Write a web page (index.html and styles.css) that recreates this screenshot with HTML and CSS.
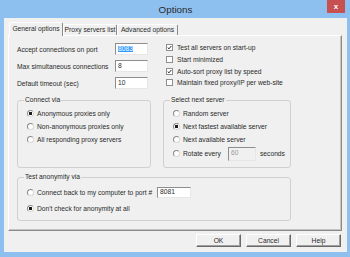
FILE: index.html
```html
<!DOCTYPE html>
<html lang="en">
<head>
    <meta charset="UTF-8">
    <title>Options</title>
    <link rel="stylesheet" href="styles.css">
</head>
<body>
    <div class="window">
        <!-- Title bar -->
        <div class="titlebar">
            <span></span>
            <span class="title">Options</span>
            <span class="close">x</span>
        </div>

        <div class="client">
            <!-- Tabs -->
            <div class="tabs">
                <div class="tab active tab-general">General options</div>
                <div class="tab tab-proxy">Proxy servers list</div>
                <div class="tab tab-advanced">Advanced options</div>
            </div>

            <div class="panel">
                <div class="top">
                    <div class="fields">
                        <div class="field">
                            <span class="field-label">Accept connections on port</span>
                            <span class="textbox"><span class="selected">8083</span></span>
                        </div>
                        <div class="field">
                            <span class="field-label">Max simultaneous connections</span>
                            <span class="textbox">8</span>
                        </div>
                        <div class="field">
                            <span class="field-label">Default timeout (sec)</span>
                            <span class="textbox">10</span>
                        </div>
                    </div>

                    <div class="checks">
                        <div class="check-row">
                            <span class="checkbox"><svg viewBox="0 0 7 7" width="5" height="5"><path d="M1 3.6 L2.8 5.4 L6 1.4" fill="none" stroke="#1a1a1a" stroke-width="1.3"/></svg></span>
                            <span>Test all servers on start-up</span>
                        </div>
                        <div class="check-row">
                            <span class="checkbox"></span>
                            <span>Start minimized</span>
                        </div>
                        <div class="check-row">
                            <span class="checkbox"><svg viewBox="0 0 7 7" width="5" height="5"><path d="M1 3.6 L2.8 5.4 L6 1.4" fill="none" stroke="#1a1a1a" stroke-width="1.3"/></svg></span>
                            <span>Auto-sort proxy list by speed</span>
                        </div>
                        <div class="check-row">
                            <span class="checkbox"></span>
                            <span>Maintain fixed proxy/IP per web-site</span>
                        </div>
                    </div>
                </div>

                <div class="groups">
                    <fieldset class="group connect">
                        <legend>Connect via</legend>
                        <div class="radio-row"><span class="radio on"></span>Anonymous proxies only</div>
                        <div class="radio-row"><span class="radio"></span>Non-anonymous proxies only</div>
                        <div class="radio-row"><span class="radio"></span>All responding proxy servers</div>
                    </fieldset>

                    <fieldset class="group next">
                        <legend>Select next server</legend>
                        <div class="radio-row"><span class="radio"></span>Random server</div>
                        <div class="radio-row"><span class="radio on"></span>Next fastest available server</div>
                        <div class="radio-row"><span class="radio"></span>Next available server</div>
                        <div class="radio-row tall">
                            <span class="radio"></span>
                            <span class="rotate-label">Rotate every</span>
                            <span class="textbox disabled">60</span>
                            <span class="seconds">seconds</span>
                        </div>
                    </fieldset>
                </div>

                <fieldset class="group anon">
                    <legend>Test anonymity via</legend>
                    <div class="radio-row">
                        <span class="radio"></span>
                        <span class="port-label">Connect back to my computer to port #</span>
                        <span class="textbox port">8081</span>
                    </div>
                    <div class="radio-row"><span class="radio on"></span>Don't check for anonymity at all</div>
                </fieldset>
            </div>

            <!-- Dialog buttons -->
            <div class="buttons">
                <button class="btn btn-default">OK</button>
                <button class="btn">Cancel</button>
                <button class="btn">Help</button>
            </div>
        </div>
    </div>
</body>
</html>
```

FILE: styles.css
```css
* {
    margin: 0;
    padding: 0;
    box-sizing: border-box;
}

body {
    width: 350px;
    height: 257px;
    overflow: hidden;
    font-family: "Liberation Sans", Arial, sans-serif;
    font-size: 6.7px;
    color: #2a2a2a;
}

/* Window frame */
.window {
    height: 257px;
    background-color: #8dc0ef;
    display: flex;
    flex-direction: column;
    padding: 0 3px 5px 4px;
}

.titlebar {
    height: 18px;
    display: grid;
    grid-template-columns: 1fr auto 1fr;
    align-items: start;
}

.title {
    font-size: 9.8px;
    line-height: 10px;
    padding-top: 5px;
    color: #2a2a2a;
}

.close {
    justify-self: end;
    width: 18px;
    height: 13px;
    margin-right: 2px;
    background-color: #c75050;
    color: #ffffff;
    font-size: 8px;
    font-weight: bold;
    display: flex;
    align-items: center;
    justify-content: center;
}

.client {
    flex: 1;
    background-color: #f0f0f0;
    display: flex;
    flex-direction: column;
    padding: 4px 5px 0 4px;
}

/* Tabs */
.tabs {
    display: flex;
    align-items: flex-end;
    height: 13px;
    padding-left: 1px;
}

.tab {
    height: 11px;
    line-height: 10px;
    text-align: center;
    border: 1px solid;
    border-color: #ffffff #8a8a8a transparent #ffffff;
    border-bottom: none;
    border-radius: 2px 2px 0 0;
    white-space: nowrap;
}

.tab.active {
    height: 14px;
    line-height: 12px;
    margin-bottom: -1px;
    position: relative;
    z-index: 1;
    background-color: #f0f0f0;
}

.tab-general { width: 54px; }
.tab-proxy { width: 54px; }
.tab-advanced { width: 61px; }

/* Tab page */
.panel {
    height: 196px;
    border: 1px solid;
    border-color: #ffffff #8a8a8a #8a8a8a #ffffff;
    box-shadow: inset -1px -1px 0 #c4c4c4;
    padding: 7px 0 0 8px;
}

.top {
    display: flex;
}

.fields {
    display: flex;
    flex-direction: column;
    gap: 5px;
}

.field {
    display: flex;
    align-items: center;
    height: 12px;
}

.field-label {
    width: 98px;
}

.textbox {
    width: 33px;
    height: 12px;
    background-color: #ffffff;
    border: 1px solid;
    border-color: #8d8d8d #e6e6e6 #e6e6e6 #8d8d8d;
    padding-left: 2px;
    display: flex;
    align-items: center;
    line-height: 1;
}

.selected {
    background-color: #3399ff;
    color: #ffffff;
}

.checks {
    margin-left: 18px;
    margin-top: -1px;
    display: flex;
    flex-direction: column;
}

.check-row {
    height: 11.7px;
    display: flex;
    align-items: center;
    gap: 4px;
}

.checkbox {
    width: 7px;
    height: 7px;
    border: 1px solid #8e8e8e;
    background-color: #ffffff;
    display: flex;
}

/* Group boxes */
.groups {
    display: flex;
    gap: 12px;
    margin-top: 7px;
}

.group {
    border: 1px solid #d0d0d0;
    border-radius: 3px;
    padding: 3px 0 0 9px;
    min-width: 0;
}

.group legend {
    line-height: 8px;
    padding: 0 1px;
    margin-left: -3px;
}

.connect { width: 134px; height: 72px; }
.next { width: 128px; height: 72px; }
.anon { width: 274px; height: 48px; margin-top: 5px; }

.radio-row {
    height: 13px;
    display: flex;
    align-items: center;
    white-space: nowrap;
}

.radio-row.tall { height: 15px; }
.anon .radio-row { height: 16px; }

.radio {
    width: 7px;
    height: 7px;
    flex-shrink: 0;
    border-radius: 50%;
    border: 1px solid;
    border-color: #8a8a8a #d8d8d8 #d8d8d8 #8a8a8a;
    background-color: #ffffff;
    margin-right: 3px;
}

.radio.on {
    background: radial-gradient(circle, #1a1a1a 0 1.4px, #ffffff 2px);
}

.rotate-label { width: 45px; }

.textbox.disabled {
    width: 28px;
    height: 14px;
    background-color: #f0f0f0;
    color: #9a9a9a;
    align-items: flex-start;
    padding-top: 2px;
}

.seconds { margin-left: 4px; }

.port-label { width: 120px; }

.textbox.port {
    width: 34px;
    height: 11px;
}

/* Dialog buttons */
.buttons {
    display: flex;
    justify-content: flex-end;
    gap: 5px;
    margin: 3px 1px 0 0;
}

.btn {
    width: 45px;
    height: 13px;
    border: 1px solid;
    border-color: #ffffff #696969 #696969 #ffffff;
    box-shadow: inset -1px -1px 0 #a0a0a0;
    background-color: #f0f0f0;
    font: inherit;
    color: #2a2a2a;
    line-height: 10px;
    text-align: center;
}
```
